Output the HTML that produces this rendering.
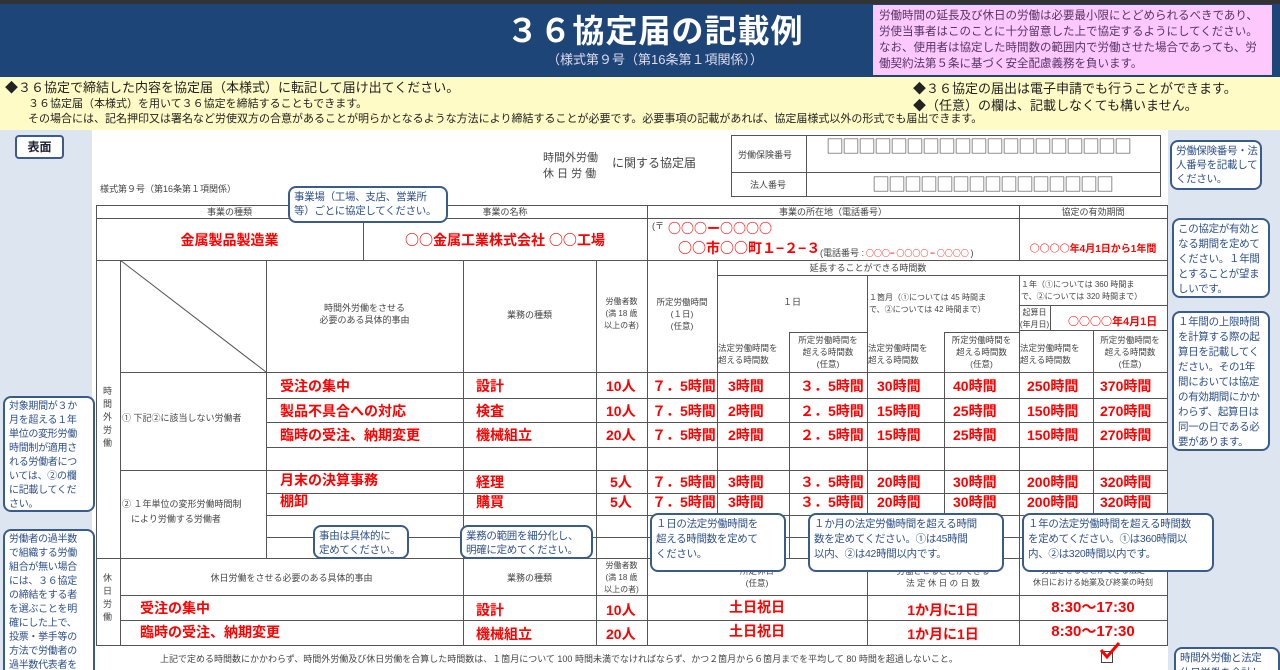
<!DOCTYPE html>
<html><head><meta charset="utf-8"><style>
*{margin:0;padding:0;box-sizing:border-box}
html,body{width:1280px;height:670px;overflow:hidden}
body{position:relative;background:#dde5f0;font-family:"Liberation Sans","Noto Sans CJK JP",sans-serif;color:#333}
div{position:absolute}
.h{height:1px;background:#555}
.v{width:1px;background:#555}
.t{font-size:9px;color:#444;line-height:12px;white-space:nowrap}
.c{text-align:center}
.r{color:#f00;font-weight:bold;font-size:14px;white-space:nowrap;line-height:16px}
.j{font-family:"Noto Sans CJK JP",sans-serif}
.co{background:#fff;border:2px solid #3a5c8c;border-radius:8px;color:#2d5089;font-size:10.5px;line-height:15px;padding:2px 4px;white-space:nowrap;overflow:hidden;letter-spacing:-0.3px}
</style></head><body>
<div style="left:0;top:0;width:1280px;height:4px;background:#333"></div>
<div style="left:0;top:4px;width:1280px;height:73px;background:#1e4578"></div>
<div style="left:0;top:12px;width:1310px;text-align:center;color:#fff;font-size:32px;font-weight:bold;letter-spacing:1px;line-height:38px">３６協定届の記載例</div>
<div style="left:0;top:52px;width:1310px;text-align:center;color:#dde;font-size:13px;line-height:16px">（様式第９号（第16条第１項関係））</div>
<div style="left:873px;top:5px;width:399px;height:70px;background:#fdc9fd;color:#553366;font-size:11.5px;line-height:16px;padding:3px 6px">労働時間の延長及び休日の労働は必要最小限にとどめられるべきであり、<br>労使当事者はこのことに十分留意した上で協定するようにしてください。<br>なお、使用者は協定した時間数の範囲内で労働させた場合であっても、労<br>働契約法第５条に基づく安全配慮義務を負います。</div>
<div style="left:0;top:77px;width:1280px;height:53px;background:#fffbc6"></div>
<div style="left:5px;top:80px;font-size:13px;line-height:16px;color:#222">◆３６協定で締結した内容を協定届（本様式）に転記して届け出てください。</div>
<div style="left:28px;top:97px;font-size:11px;line-height:15px;color:#222">３６協定届（本様式）を用いて３６協定を締結することもできます。<br>その場合には、記名押印又は署名など労使双方の合意があることが明らかとなるような方法により締結することが必要です。必要事項の記載があれば、協定届様式以外の形式でも届出できます。</div>
<div style="left:913px;top:80px;font-size:13px;line-height:17px;color:#222">◆３６協定の届出は電子申請でも行うことができます。<br>◆（任意）の欄は、記載しなくても構いません。</div>
<div style="left:92px;top:130px;width:1076px;height:540px;background:#fff"></div>
<div style="left:15px;top:135px;width:49px;height:24px;border:2px solid #3a5c8c;border-radius:4px;background:#fff;font-size:12px;font-weight:bold;text-align:center;line-height:20px;color:#223">表面</div>
<div class="t" style="left:543px;top:150px;font-size:11px;line-height:16px">時間外労働<br>休 日 労 働</div>
<div class="t" style="left:612px;top:157px;font-size:12px">に関する協定届</div>
<div class="t" style="left:100px;top:183px">様式第９号（第16条第１項関係）</div>
<div style="left:731px;top:135px;width:430px;height:62px;border:1px solid #555"></div>
<div class="v" style="left:806px;top:135px;height:62px"></div>
<div class="h" style="left:731px;top:172px;width:430px"></div>
<div class="t" style="left:738px;top:149px">労働保険番号</div>
<div class="t" style="left:750px;top:179px">法人番号</div>
<div class="j" style="left:826px;top:136px;font-size:18px;letter-spacing:-2px;color:#555;line-height:20px">□□□□□□□□□□□□□□□□□□□</div>
<div class="j" style="left:872px;top:174px;font-size:18px;letter-spacing:-2px;color:#555;line-height:20px">□□□□□□□□□□□□□□□</div>

<div style="left:96px;top:205px;width:1072px;height:441px;border:1px solid #555"></div>
<div class="h" style="left:96px;top:218px;width:1072px"></div>
<div class="h" style="left:96px;top:260px;width:1072px"></div>
<div class="h" style="left:717px;top:275px;width:450px"></div>
<div class="h" style="left:1019px;top:305px;width:148px"></div>
<div class="h" style="left:789px;top:332px;width:78px"></div>
<div class="h" style="left:944px;top:332px;width:75px"></div>
<div class="h" style="left:1019px;top:330px;width:148px"></div>
<div class="h" style="left:120px;top:372px;width:1047px"></div>
<div class="h" style="left:266px;top:398px;width:901px"></div>
<div class="h" style="left:266px;top:422px;width:901px"></div>
<div class="h" style="left:266px;top:447px;width:901px"></div>
<div class="h" style="left:120px;top:470px;width:1047px"></div>
<div class="h" style="left:266px;top:493px;width:901px"></div>
<div class="h" style="left:266px;top:515px;width:901px"></div>
<div class="h" style="left:266px;top:537px;width:901px"></div>
<div class="h" style="left:96px;top:558px;width:1072px"></div>
<div class="h" style="left:120px;top:595px;width:1047px"></div>
<div class="h" style="left:120px;top:620px;width:1047px"></div>
<div class="v" style="left:363px;top:205px;height:55px"></div>
<div class="v" style="left:647px;top:205px;height:440px"></div>
<div class="v" style="left:1019px;top:205px;height:55px"></div>
<div class="v" style="left:1019px;top:275px;height:370px"></div>
<div class="v" style="left:120px;top:260px;height:385px"></div>
<div class="v" style="left:266px;top:260px;height:298px"></div>
<div class="v" style="left:463px;top:260px;height:385px"></div>
<div class="v" style="left:596px;top:260px;height:385px"></div>
<div class="v" style="left:717px;top:260px;height:298px"></div>
<div class="v" style="left:789px;top:332px;height:226px"></div>
<div class="v" style="left:867px;top:275px;height:370px"></div>
<div class="v" style="left:944px;top:332px;height:226px"></div>
<div class="v" style="left:1050px;top:305px;height:25px"></div>
<div class="v" style="left:1093px;top:330px;height:228px"></div>
<svg style="position:absolute;left:120px;top:260px" width="146" height="112"><line x1="0" y1="0" x2="146" y2="112" stroke="#555"/></svg>

<div class="t c" style="left:96px;top:206px;width:267px">事業の種類</div>
<div class="t c" style="left:363px;top:206px;width:284px">事業の名称</div>
<div class="t c" style="left:647px;top:206px;width:372px">事業の所在地（電話番号）</div>
<div class="t c" style="left:1019px;top:206px;width:148px">協定の有効期間</div>
<div class="r c" style="left:96px;top:232px;width:267px">金属製品製造業</div>
<div class="r c" style="left:363px;top:232px;width:284px"><span class="j">○○</span>金属工業株式会社 <span class="j">○○</span>工場</div>
<div class="t" style="left:652px;top:220px">(〒</div>
<div class="r j" style="left:668px;top:220px;font-size:13px">○○○ー○○○○</div>
<div class="r" style="left:678px;top:240px"><span class="j">○○</span>市<span class="j">○○</span>町１−２−３</div>
<div class="t" style="left:820px;top:247px">(電話番号 :<span class="j" style="color:#f00;font-weight:bold;font-size:8px"> ○○○− ○○○○ − ○○○○ </span>)</div>
<div class="r c" style="left:1019px;top:240px;width:148px;font-size:10px"><span class="j">○○○○</span>年4月1日から1年間</div>
<div class="t c" style="left:717px;top:262px;width:302px">延長することができる時間数</div>
<div class="t c" style="left:266px;top:302px;width:197px">時間外労働をさせる<br>必要のある具体的事由</div>
<div class="t c" style="left:463px;top:309px;width:133px">業務の種類</div>
<div class="t c" style="left:596px;top:296px;width:51px;font-size:8px">労働者数<br>(満 18 歳<br>以上の者)</div>
<div class="t c" style="left:647px;top:296px;width:70px;font-size:8.5px">所定労働時間<br>(１日)<br>(任意)</div>
<div class="t c" style="left:717px;top:296px;width:150px">１日</div>
<div class="t" style="left:869px;top:292px;font-size:8px">１箇月（①については 45 時間ま<br>で、②については 42 時間まで）</div>
<div class="t" style="left:1021px;top:279px;font-size:8px">１年（①については 360 時間ま<br>で、②については 320 時間まで）</div>
<div class="t c" style="left:1019px;top:307px;width:31px;font-size:8px">起算日<br>(年月日)</div>
<div class="r" style="left:1068px;top:313px;font-size:11px"><span class="j">○○○○</span>年4月1日</div>
<div class="t" style="left:718px;top:342px;font-size:8.5px">法定労働時間を<br>超える時間数</div>
<div class="t c" style="left:789px;top:334px;width:78px;font-size:8.5px">所定労働時間を<br>超える時間数<br>(任意)</div>
<div class="t" style="left:868px;top:342px;font-size:8.5px">法定労働時間を<br>超える時間数</div>
<div class="t c" style="left:944px;top:334px;width:75px;font-size:8.5px">所定労働時間を<br>超える時間数<br>(任意)</div>
<div class="t" style="left:1020px;top:342px;font-size:8.5px">法定労働時間を<br>超える時間数</div>
<div class="t c" style="left:1093px;top:334px;width:74px;font-size:8.5px">所定労働時間を<br>超える時間数<br>(任意)</div>
<div class="t" style="left:103px;top:385px;width:12px;white-space:normal;line-height:13px">時間外労働</div>
<div class="t" style="left:122px;top:412px">① 下記②に該当しない労働者</div>
<div class="t" style="left:122px;top:497px;line-height:15px">② １年単位の変形労働時間制<br>　により労働する労働者</div>
<div class="t" style="left:103px;top:572px;width:12px;white-space:normal;line-height:13px">休日労働</div>
<div class="t c" style="left:120px;top:572px;width:343px">休日労働をさせる必要のある具体的事由</div>
<div class="t c" style="left:463px;top:572px;width:133px">業務の種類</div>
<div class="t c" style="left:596px;top:560px;width:51px;font-size:8px">労働者数<br>(満 18 歳<br>以上の者)</div>
<div class="t c" style="left:647px;top:565px;width:220px;font-size:8.5px">所定休日<br>(任意)</div>
<div class="t c" style="left:867px;top:565px;width:152px;font-size:8.5px">労働させることができる<br>法 定 休 日 の 日 数</div>
<div class="t c" style="left:1019px;top:565px;width:148px;font-size:8px">労働させることができる法定<br>休日における始業及び終業の時刻</div>

<div class="r" style="left:280px;top:378px">受注の集中</div><div class="r" style="left:476px;top:378px">設計</div><div class="r" style="left:606px;top:378px">10人</div>
<div class="r" style="left:652px;top:378px">７．5時間</div><div class="r" style="left:728px;top:378px">3時間</div><div class="r" style="left:800px;top:378px">３．5時間</div><div class="r" style="left:877px;top:378px">30時間</div><div class="r" style="left:953px;top:378px">40時間</div><div class="r" style="left:1027px;top:378px">250時間</div><div class="r" style="left:1100px;top:378px">370時間</div>
<div class="r" style="left:280px;top:403px">製品不具合への対応</div><div class="r" style="left:476px;top:403px">検査</div><div class="r" style="left:606px;top:403px">10人</div>
<div class="r" style="left:652px;top:403px">７．5時間</div><div class="r" style="left:728px;top:403px">2時間</div><div class="r" style="left:800px;top:403px">２．5時間</div><div class="r" style="left:877px;top:403px">15時間</div><div class="r" style="left:953px;top:403px">25時間</div><div class="r" style="left:1027px;top:403px">150時間</div><div class="r" style="left:1100px;top:403px">270時間</div>
<div class="r" style="left:280px;top:427px">臨時の受注、納期変更</div><div class="r" style="left:476px;top:427px">機械組立</div><div class="r" style="left:606px;top:427px">20人</div>
<div class="r" style="left:652px;top:427px">７．5時間</div><div class="r" style="left:728px;top:427px">2時間</div><div class="r" style="left:800px;top:427px">２．5時間</div><div class="r" style="left:877px;top:427px">15時間</div><div class="r" style="left:953px;top:427px">25時間</div><div class="r" style="left:1027px;top:427px">150時間</div><div class="r" style="left:1100px;top:427px">270時間</div>
<div class="r" style="left:280px;top:472px">月末の決算事務</div><div class="r" style="left:476px;top:474px">経理</div><div class="r" style="left:610px;top:474px">5人</div>
<div class="r" style="left:652px;top:474px">７．5時間</div><div class="r" style="left:728px;top:474px">3時間</div><div class="r" style="left:800px;top:474px">３．5時間</div><div class="r" style="left:877px;top:474px">20時間</div><div class="r" style="left:953px;top:474px">30時間</div><div class="r" style="left:1027px;top:474px">200時間</div><div class="r" style="left:1100px;top:474px">320時間</div>
<div class="r" style="left:280px;top:493px">棚卸</div><div class="r" style="left:476px;top:494px">購買</div><div class="r" style="left:610px;top:494px">5人</div>
<div class="r" style="left:652px;top:494px">７．5時間</div><div class="r" style="left:728px;top:494px">3時間</div><div class="r" style="left:800px;top:494px">３．5時間</div><div class="r" style="left:877px;top:494px">20時間</div><div class="r" style="left:953px;top:494px">30時間</div><div class="r" style="left:1027px;top:494px">200時間</div><div class="r" style="left:1100px;top:494px">320時間</div>
<div class="r" style="left:140px;top:600px">受注の集中</div><div class="r" style="left:476px;top:602px">設計</div><div class="r" style="left:606px;top:602px">10人</div>
<div class="r c" style="left:647px;top:599px;width:220px">土日祝日</div><div class="r c" style="left:867px;top:602px;width:152px">1か月に1日</div><div class="r c" style="left:1019px;top:600px;width:148px;font-size:15px">8:30〜17:30</div>
<div class="r" style="left:140px;top:624px">臨時の受注、納期変更</div><div class="r" style="left:476px;top:626px">機械組立</div><div class="r" style="left:606px;top:626px">20人</div>
<div class="r c" style="left:647px;top:623px;width:220px">土日祝日</div><div class="r c" style="left:867px;top:626px;width:152px">1か月に1日</div><div class="r c" style="left:1019px;top:624px;width:148px;font-size:15px">8:30〜17:30</div>
<div class="t" style="left:160px;top:653px">上記で定める時間数にかかわらず、時間外労働及び休日労働を合算した時間数は、１箇月について 100 時間未満でなければならず、かつ２箇月から６箇月までを平均して 80 時間を超過しないこと。</div>
<div style="left:1101px;top:651px;width:12px;height:12px;border:1px solid #444"></div>
<svg style="position:absolute;left:1098px;top:640px" width="24" height="20"><path d="M3 10 L9 17 L21 3" stroke="#f00" stroke-width="3" fill="none"/></svg>

<div class="co" style="left:288px;top:186px;width:160px;height:37px;line-height:14px">事業場（工場、支店、営業所<br>等）ごとに協定してください。</div>
<div class="co" style="left:1170px;top:140px;width:92px;height:50px;line-height:14px">労働保険番号・法<br>人番号を記載して<br>ください。</div>
<div class="co" style="left:1172px;top:218px;width:98px;height:80px">この協定が有効と<br>なる期間を定めて<br>ください。１年間<br>とすることが望ま<br>しいです。</div>
<div class="co" style="left:1172px;top:311px;width:98px;height:140px">１年間の上限時間<br>を計算する際の起<br>算日を記載してく<br>ださい。その1年<br>間においては協定<br>の有効期間にかか<br>わらず、起算日は<br>同一の日である必<br>要があります。</div>
<div class="co" style="left:3px;top:396px;width:92px;height:116px;line-height:14px;font-size:10px">対象期間が３か<br>月を超える１年<br>単位の変形労働<br>時間制が適用さ<br>れる労働者につ<br>いては、②の欄<br>に記載してくだ<br>さい。</div>
<div class="co" style="left:3px;top:529px;width:92px;height:150px;font-size:10px;line-height:14px">労働者の過半数<br>で組織する労働<br>組合が無い場合<br>には、３６協定<br>の締結をする者<br>を選ぶことを明<br>確にした上で、<br>投票・挙手等の<br>方法で労働者の<br>過半数代表者を</div>
<div class="co" style="left:313px;top:525px;width:96px;height:34px;line-height:14px">事由は具体的に<br>定めてください。</div>
<div class="co" style="left:460px;top:525px;width:133px;height:34px;line-height:14px">業務の範囲を細分化し、<br>明確に定めてください。</div>
<div class="co" style="left:650px;top:513px;width:136px;height:59px">１日の法定労働時間を<br>超える時間数を定めて<br>ください。</div>
<div class="co" style="left:808px;top:513px;width:196px;height:59px">１か月の法定労働時間を超える時間<br>数を定めてください。①は45時間<br>以内、②は42時間以内です。</div>
<div class="co" style="left:1022px;top:513px;width:192px;height:59px">１年の法定労働時間を超える時間数<br>を定めてください。①は360時間以<br>内、②は320時間以内です。</div>
<div class="co" style="left:1174px;top:647px;width:106px;height:40px">時間外労働と法定<br>休日労働を合計し</div>
</body></html>
